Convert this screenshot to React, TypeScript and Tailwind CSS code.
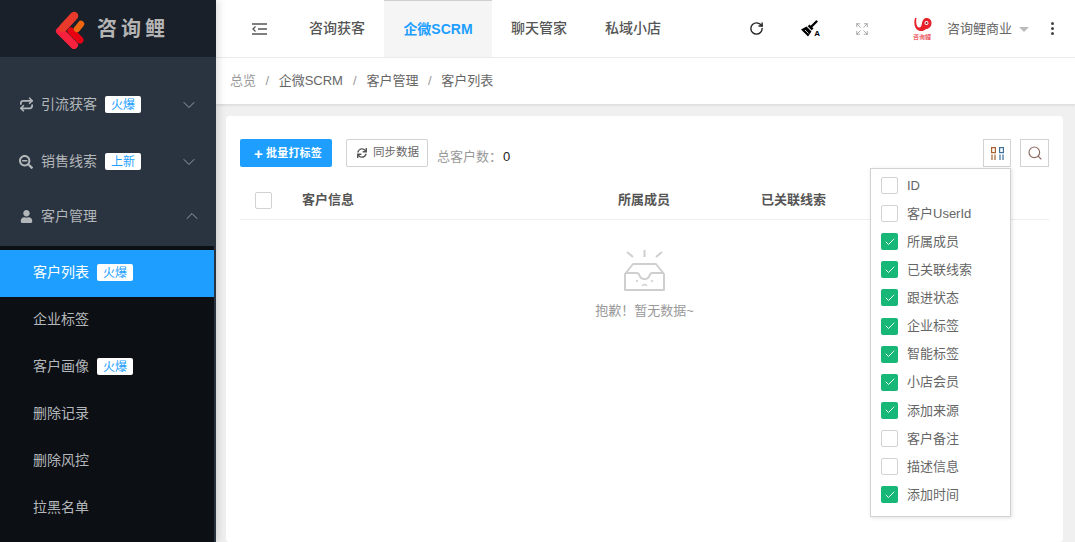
import React from 'react';
import { Check, ChevronDown, ChevronUp, Expand, Repeat, RotateCw, Search } from 'lucide-react';
import { FaSearchMinus, FaSync, FaUser } from 'react-icons/fa';

const FONT = 'font-["Liberation_Sans","Noto_Sans_CJK_SC",sans-serif]';

const Tag = ({ label }: { label: string }) => (
  <span className="flex h-[17px] w-[36px] items-center justify-center rounded-[2px] bg-white text-[12px] text-[#1e9fff]">
    {label}
  </span>
);

const Logo = () => (
  <svg width="36" height="40" viewBox="0 0 36 40" className="shrink-0">
    <g fill="none" strokeLinecap="round">
      <line x1="8" y1="22" x2="22" y2="36" stroke="#f8223f" strokeWidth="8" />
      <line x1="22" y1="7" x2="11" y2="19" stroke="#e8392a" strokeWidth="8.500" />
      <line x1="19" y1="22" x2="28" y2="31" stroke="#e60012" strokeWidth="7" />
      <line x1="25" y1="20" x2="29" y2="15" stroke="#f0650f" strokeWidth="6.500" />
    </g>
  </svg>
);

const FishLogo = () => (
  <div className="flex w-[20px] flex-col items-center">
    <svg width="19" height="16" viewBox="0 0 19 16">
      <path d="M2 1c-1.500 5-.5 12 5 13 3 .5 5-1 6-2 3 0 5.500-2.500 5.500-6S16 1 13.500 1 9.500 3 9 6c-.3 2.500-1 4.500-3 4.500S2.500 6 3.500 1z" fill="#e8202a" />
      <circle cx="13.500" cy="6" r="2" fill="#fff" />
      <circle cx="13.500" cy="6" r="1" fill="#7a1015" />
    </svg>
    <span className="mt-[1px] whitespace-nowrap text-[6px] leading-[7px] text-[#e8202a]">咨询鲤</span>
  </div>
);

const BrushIcon = () => (
  <span className="relative block h-[18px] w-[19px] text-black">
    <svg width="17" height="17" viewBox="0 0 17 17">
      <path d="M15.500 1.500L10 7" stroke="#000" strokeWidth="2.400" strokeLinecap="round" />
      <path d="M8.500 4.500l4 4-1.800 1.800-4-4z" fill="#000" />
      <path d="M5.500 6.500l5 5-3.500 5L0 9.500z" fill="#000" />
      <path d="M4 10l3.500 3.500" stroke="#fff" strokeWidth="0.800" />
    </svg>
    <span className="absolute bottom-0 right-0 text-[8px] font-bold leading-[8px]">A</span>
  </span>
);

const mainMenu = [
  { label: '引流获客', tag: '火爆', icon: <Repeat size={15} strokeWidth={2.800} />, open: false },
  { label: '销售线索', tag: '上新', icon: <FaSearchMinus size={14} />, open: false },
  { label: '客户管理', tag: '', icon: <FaUser size={13} />, open: true },
];

const subMenu = [
  { label: '客户列表', tag: '火爆', active: true },
  { label: '企业标签', tag: '', active: false },
  { label: '客户画像', tag: '火爆', active: false },
  { label: '删除记录', tag: '', active: false },
  { label: '删除风控', tag: '', active: false },
  { label: '拉黑名单', tag: '', active: false },
];

const Sidebar = () => (
  <aside className="z-20 flex h-full w-[216px] shrink-0 flex-col overflow-hidden bg-[#2a3440] shadow-[2px_0_8px_rgba(0,0,0,0.15)]">
    <div className="flex h-[57px] shrink-0 items-center bg-[#19202a] pl-[52px]">
      <Logo />
      <span className="ml-[9px] whitespace-nowrap pt-[1px] text-[20px] font-bold tracking-[4px] text-[#b4b4b4]">咨询鲤</span>
    </div>
    <div className="h-[19px] shrink-0" />
    {mainMenu.map((item, i) => (
      <div
        key={item.label}
        className={`flex shrink-0 items-center pl-[18px] text-[14px] text-[#b4b7ba] ${i === 2 ? 'h-[56px] pb-[4px] pr-[14px]' : 'h-[57px] pr-[17px]'}`}
      >
        <span className="flex w-[16px] justify-center text-[#b4b7ba]">{item.icon}</span>
        <span className="ml-[7px]">{item.label}</span>
        {item.tag && <span className="ml-[8px]"><Tag label={item.tag} /></span>}
        <span className="ml-auto text-[#98a0a8]">
          {item.open ? <ChevronUp size={20} strokeWidth={1.200} /> : <ChevronDown size={20} strokeWidth={1.200} />}
        </span>
      </div>
    ))}
    <div className="mr-[2px] flex-1 bg-[#0c0f14] pt-[4px]">
      {subMenu.map((item) => (
        <div
          key={item.label}
          className={`flex h-[47px] items-center gap-[8px] pb-[2px] pl-[33px] text-[14px] ${item.active ? 'bg-[#1e9fff] text-white' : 'text-[#b4b7ba]'}`}
        >
          <span>{item.label}</span>
          {item.tag && <Tag label={item.tag} />}
        </div>
      ))}
    </div>
  </aside>
);

const tabs = [
  { label: '咨询获客', width: 'w-[94px]' },
  { label: '企微SCRM', width: 'w-[108px]' },
  { label: '聊天管家', width: 'w-[94px]' },
  { label: '私域小店', width: 'w-[94px]' },
];

const Header = () => (
  <header className="flex h-[58px] shrink-0 items-center border-b border-[#f0f0f0] bg-white">
    <div className="flex w-[74px] justify-start pl-[36px]">
      <svg width="15" height="12" viewBox="0 0 15 12" fill="none" stroke="#555" strokeWidth="1.400">
        <path d="M0 1h15M6 6h9M0 11h15" />
        <path d="M3.500 3.500L1 6l2.500 2.500" strokeWidth="1.300" />
      </svg>
    </div>
    <nav className="flex h-full">
      {tabs.map((tab) => (
        <div
          key={tab.label}
          className={`flex h-full items-center justify-center text-[14px] ${tab.width} ${tab.label === '企微SCRM' ? 'border-t border-[#cfcfcf] bg-[#f5f5f5] font-bold text-[#1e9fff]' : 'font-medium text-[#555]'}`}
        >
          {tab.label}
        </div>
      ))}
    </nav>
    <div className="ml-[69px] flex items-center text-[#222]">
      <RotateCw size={15} strokeWidth={2.200} />
      <span className="ml-[37px]"><BrushIcon /></span>
      <Expand size={14} strokeWidth={1.200} className="ml-[35px] text-[#888]" />
      <span className="ml-[43px]"><FishLogo /></span>
      <span className="ml-[15px] whitespace-nowrap text-[13px] text-[#666]">咨询鲤商业</span>
      <span className="ml-[7px] mt-[2px] h-0 w-0 border-x-[5px] border-t-[5px] border-x-transparent border-t-[#bbb]" />
      <span className="ml-[22px] flex flex-col gap-[2px]">
        <i className="block h-[3px] w-[3px] rounded-full bg-[#444]" />
        <i className="block h-[3px] w-[3px] rounded-full bg-[#444]" />
        <i className="block h-[3px] w-[3px] rounded-full bg-[#444]" />
      </span>
    </div>
  </header>
);

const Breadcrumb = () => (
  <div className="z-10 flex h-[46px] shrink-0 items-center bg-white pl-[14px] text-[13px] text-[#666] shadow-[0_1px_3px_rgba(0,0,0,0.12)]">
    <span className="text-[#999]">总览</span>
    <span className="mx-[9.500px] text-[#999]">/</span>
    <span>企微SCRM</span>
    <span className="mx-[10px] text-[#999]">/</span>
    <span>客户管理</span>
    <span className="mx-[9.500px] text-[#999]">/</span>
    <span>客户列表</span>
  </div>
);

const Box = ({ checked }: { checked: boolean }) =>
  checked ? (
    <span className="flex h-[17px] w-[17px] shrink-0 items-center justify-center rounded-[2px] bg-[#16b777] text-white">
      <Check size={12} strokeWidth={1.800} />
    </span>
  ) : (
    <span className="block h-[17px] w-[17px] shrink-0 rounded-[2px] border border-[#d2d2d2] bg-white" />
  );

const columns = [
  { label: 'ID', on: false },
  { label: '客户UserId', on: false },
  { label: '所属成员', on: true },
  { label: '已关联线索', on: true },
  { label: '跟进状态', on: true },
  { label: '企业标签', on: true },
  { label: '智能标签', on: true },
  { label: '小店会员', on: true },
  { label: '添加来源', on: true },
  { label: '客户备注', on: false },
  { label: '描述信息', on: false },
  { label: '添加时间', on: true },
];

const ColumnPopover = () => (
  <div className="absolute right-[52px] top-[52px] z-30 w-[141px] border border-[#d2d2d2] bg-white pb-[7px] pt-[3px] shadow-[1px_1px_4px_rgba(0,0,0,0.12)]">
    {columns.map((col) => (
      <div key={col.label} className="flex h-[28.1px] items-center pb-[1px] pl-[10px] text-[13px] text-[#666]">
        <Box checked={col.on} />
        <span className="ml-[9px] whitespace-nowrap">{col.label}</span>
      </div>
    ))}
  </div>
);

const EmptyIcon = () => (
  <svg width="46" height="43" viewBox="0 0 46 43" fill="none" stroke="#cfcfcf" strokeWidth="2">
    <path d="M22.500 1v7M5 3l6 5M40 3l-6 5" />
    <path d="M3 25l8-10h23l8 10v16H3z" strokeLinejoin="round" />
    <path d="M3 24h12c1 0 2 1 2.500 2.500S20 30 22.500 30s4.500-2 5-3.500S29 24 30 24h12" />
    <path d="M14 31.500l2 1M31 31.500l-2 1M20 37c1-2 4-2 5 0" strokeWidth="1.400" />
  </svg>
);

const ContentCard = () => (
  <div className="relative h-full rounded-[4px] bg-white px-[14px] pt-[23px]">
    <div className="flex items-center">
      <button className="flex h-[28px] w-[92px] items-center justify-center rounded-[2px] bg-[#1e9fff] pl-[4px] text-[11px] font-bold tracking-[0.2px] text-white">
        <span className="mr-[3px] text-[15px] leading-none">+</span>批量打标签
      </button>
      <button className="ml-[14px] flex h-[28px] w-[82px] items-center justify-center gap-[6px] rounded-[2px] border border-[#d2d2d2] bg-white pl-[2px] text-[11.500px] text-[#666]">
        <FaSync size={10} className="text-[#555]" />
        同步数据
      </button>
      <span className="ml-[9px] mt-[7px] text-[13px] text-[#999]">总客户数：</span>
      <span className="ml-[1px] mt-[7px] text-[13px] text-[#222]">0</span>
      <button className="ml-auto flex h-[28px] w-[28px] items-center justify-center border border-[#d2d2d2]">
        <svg width="13" height="13" viewBox="0 0 13 13" fill="none" strokeWidth="1.200">
          <g stroke="#a8602f">
            <rect x="0.600" y="0.600" width="3.800" height="5" />
            <path d="M1 7.500V13M4 7.500V13" />
          </g>
          <g stroke="#3d6f98">
            <rect x="8.600" y="0.600" width="3.800" height="5" />
            <path d="M9 7.500V13M12 7.500V13" />
          </g>
        </svg>
      </button>
      <button className="ml-[9px] flex h-[28px] w-[29px] items-center justify-center border border-[#d2d2d2] text-[#8a6a60]">
        <Search size={16} strokeWidth={1.700} />
      </button>
    </div>
    <div className="mt-[14px] flex h-[39px] items-center border-b border-[#eee] text-[13px] font-bold text-[#555]">
      <span className="ml-[15px]"><Box checked={false} /></span>
      <span className="ml-[30px] w-[316px]">客户信息</span>
      <span className="w-[143px]">所属成员</span>
      <span>已关联线索</span>
    </div>
    <div className="mt-[29px] flex flex-col items-center">
      <EmptyIcon />
      <span className="mt-[9px] text-[13px] text-[#999]">抱歉！暂无数据~</span>
    </div>
    <ColumnPopover />
  </div>
);

export default function App() {
  return (
    <div className={`flex h-screen w-full overflow-hidden bg-[#f0f0f0] ${FONT}`}>
      <Sidebar />
      <main className="flex min-w-0 flex-1 flex-col">
        <Header />
        <Breadcrumb />
        <div className="flex-1 pl-[10px] pr-[12px] pt-[12px]">
          <ContentCard />
        </div>
      </main>
    </div>
  );
}
